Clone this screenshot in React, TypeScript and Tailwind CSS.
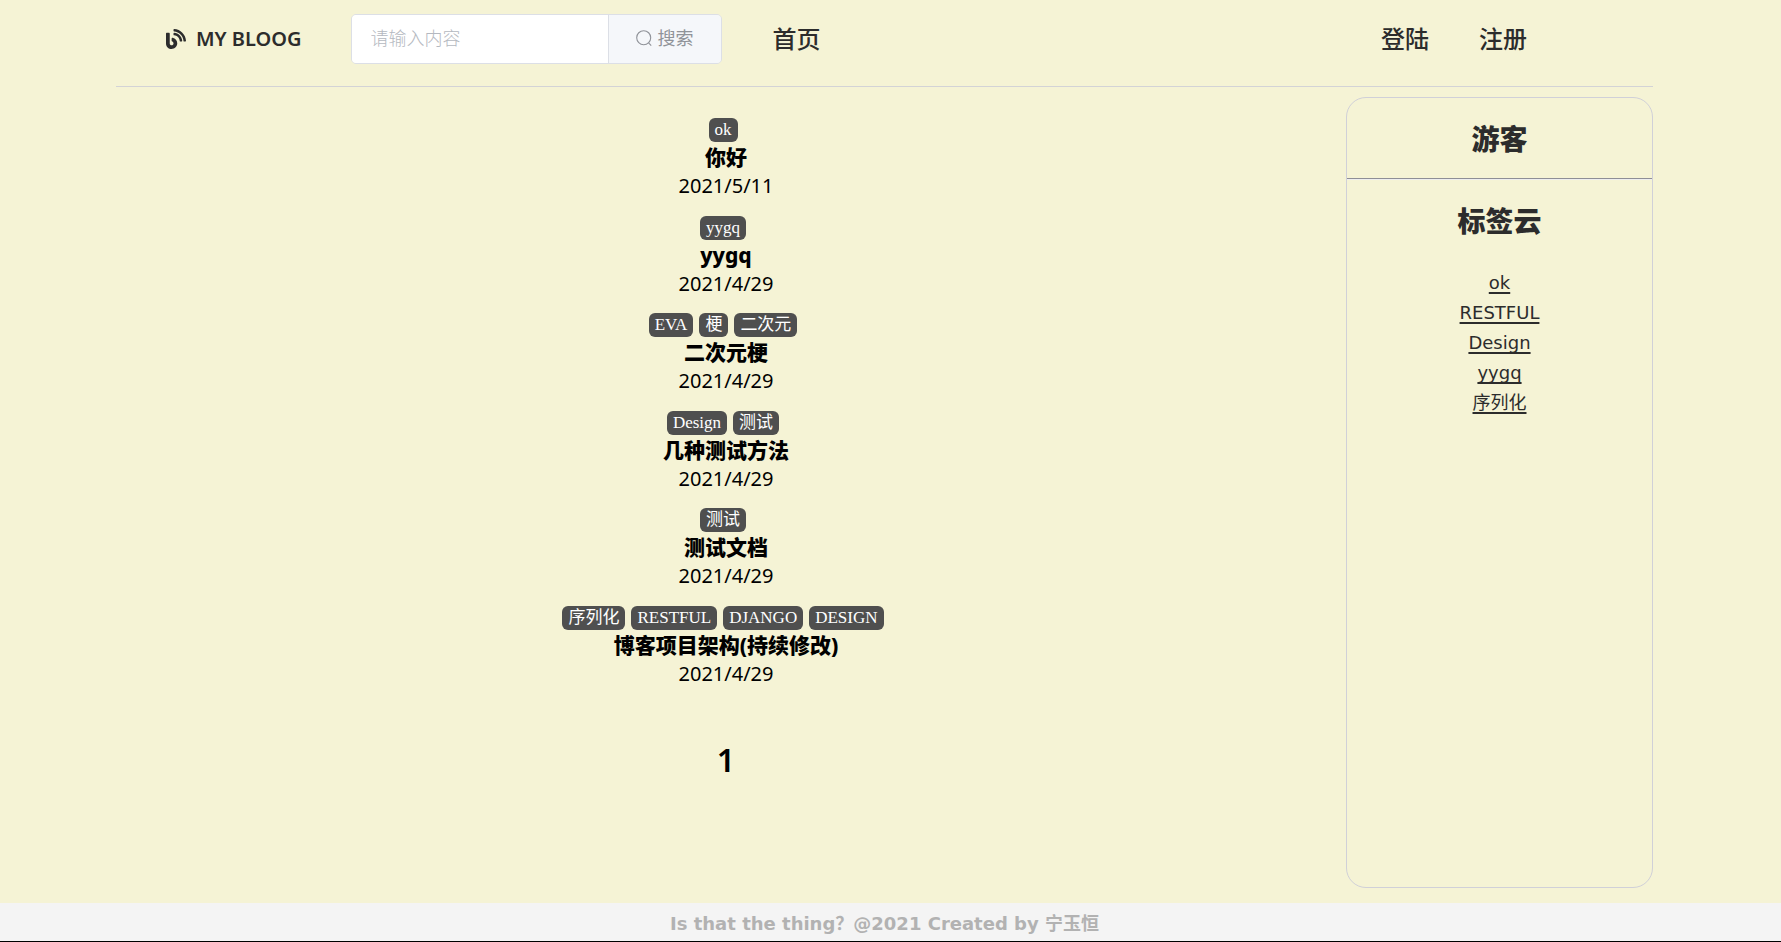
import { FaBlog } from "react-icons/fa";

type Post = { tags: string[]; title: string; date: string };

const posts: Post[] = [
  { tags: ["ok"], title: "你好", date: "2021/5/11" },
  { tags: ["yygq"], title: "yygq", date: "2021/4/29" },
  { tags: ["EVA", "梗", "二次元"], title: "二次元梗", date: "2021/4/29" },
  { tags: ["Design", "测试"], title: "几种测试方法", date: "2021/4/29" },
  { tags: ["测试"], title: "测试文档", date: "2021/4/29" },
  {
    tags: ["序列化", "RESTFUL", "DJANGO", "DESIGN"],
    title: "博客项目架构(持续修改)",
    date: "2021/4/29",
  },
];

const cloud = ["ok", "RESTFUL", "Design", "yygq", "序列化"];

function SearchIcon() {
  return (
    <svg viewBox="0 0 16 16" className="size-4" fill="none" stroke="currentColor" strokeWidth="1.1" aria-hidden="true">
      <circle cx="7.7" cy="7.7" r="7" />
      <path d="M12.6 12.8 15.2 15.6" />
    </svg>
  );
}

function Header() {
  return (
    <header className="flex h-[87px] items-start border-b border-[#d3d3d6] pt-3.5 text-[#2c2c2c]">
      <a href="#" className="ml-[50px] flex h-[50px] items-center gap-2.5 text-xl font-semibold">
        <FaBlog className="size-5" />
        MY BLOOG
      </a>
      <form className="ml-[49px] flex h-[50px] w-[371px] overflow-hidden rounded-[5px] border border-[#dcdfe6] text-lg">
        <input
          type="text"
          aria-label="搜索内容"
          placeholder="请输入内容"
          className="min-w-0 flex-1 bg-white px-[19px] pb-0.5 font-light outline-none placeholder:text-[#b4b8c0]"
        />
        <button
          type="button"
          className="flex w-[113px] items-center justify-center gap-1.5 border-l border-[#dcdfe6] bg-[#f5f7fa] pb-0.5 text-[#909399]"
        >
          <SearchIcon />
          搜索
        </button>
      </form>
      <nav className="flex h-[50px] flex-1 items-center pr-[126px] pl-[51px] text-2xl font-medium">
        <a href="#">首页</a>
        <a href="#" className="ml-auto">
          登陆
        </a>
        <a href="#" className="ml-[50px]">
          注册
        </a>
      </nav>
    </header>
  );
}

function PostItem({ post }: { post: Post }) {
  return (
    <article className="text-center text-black">
      <div className="flex justify-center">
        {post.tags.map((tag) => (
          <span
            key={tag}
            className="mr-1.5 h-6 rounded-md bg-[#4f4f4f] px-1.5 font-['Liberation_Serif','Noto_Sans_CJK_SC',serif] text-[17px] leading-6 text-white"
          >
            {tag}
          </span>
        ))}
      </div>
      <h2 className="text-[21px] leading-[30px] font-extrabold">{post.title}</h2>
      <time className="block text-xl leading-7">{post.date}</time>
    </article>
  );
}

function Sidebar() {
  return (
    <aside className="min-h-[791px] w-[307px] shrink-0 rounded-[20px] border border-[#d0d0d8] text-center text-[#2c2c2c]">
      <h2 className="flex h-20 items-center justify-center pt-0.5 text-[28px] font-black">游客</h2>
      <hr className="border-t border-b border-t-[#8e8e96] border-b-[#eeeeee]" />
      <h2 className="flex h-20 items-center justify-center pt-0.5 text-[28px] font-black">标签云</h2>
      <ul className="pt-2 font-['DejaVu_Sans','Noto_Sans_CJK_SC',sans-serif] text-lg leading-[30px]">
        {cloud.map((tag) => (
          <li key={tag}>
            <a href="#" className="underline decoration-2 underline-offset-3 [text-decoration-skip-ink:none]">
              {tag}
            </a>
          </li>
        ))}
      </ul>
    </aside>
  );
}

export default function App() {
  return (
    <div className="flex min-h-screen flex-col border-b border-black bg-[#f5f3d5] font-['Noto_Sans','Noto_Sans_CJK_SC',sans-serif]">
      <div className="flex-1 pr-32 pl-[116px]">
        <Header />
        <div className="flex items-start gap-3 pt-2.5 pb-3.5">
          <main className="flex-1 pt-[21px] pl-0.5">
            <div className="grid min-h-[585px] auto-rows-fr">
              {posts.map((post) => (
                <PostItem key={post.title} post={post} />
              ))}
            </div>
            <nav className="mt-8 text-center text-[32px] leading-[50px] font-semibold">
              <a href="#">1</a>
            </nav>
          </main>
          <Sidebar />
        </div>
      </div>
      <footer className="bg-[#f4f4f4] pt-1 pr-3 text-center font-['DejaVu_Sans','Noto_Sans_CJK_SC',sans-serif] text-lg leading-[34px] font-bold text-[#b2b2b2]">
        Is that the thing？@2021 Created by 宁玉恒
      </footer>
    </div>
  );
}
